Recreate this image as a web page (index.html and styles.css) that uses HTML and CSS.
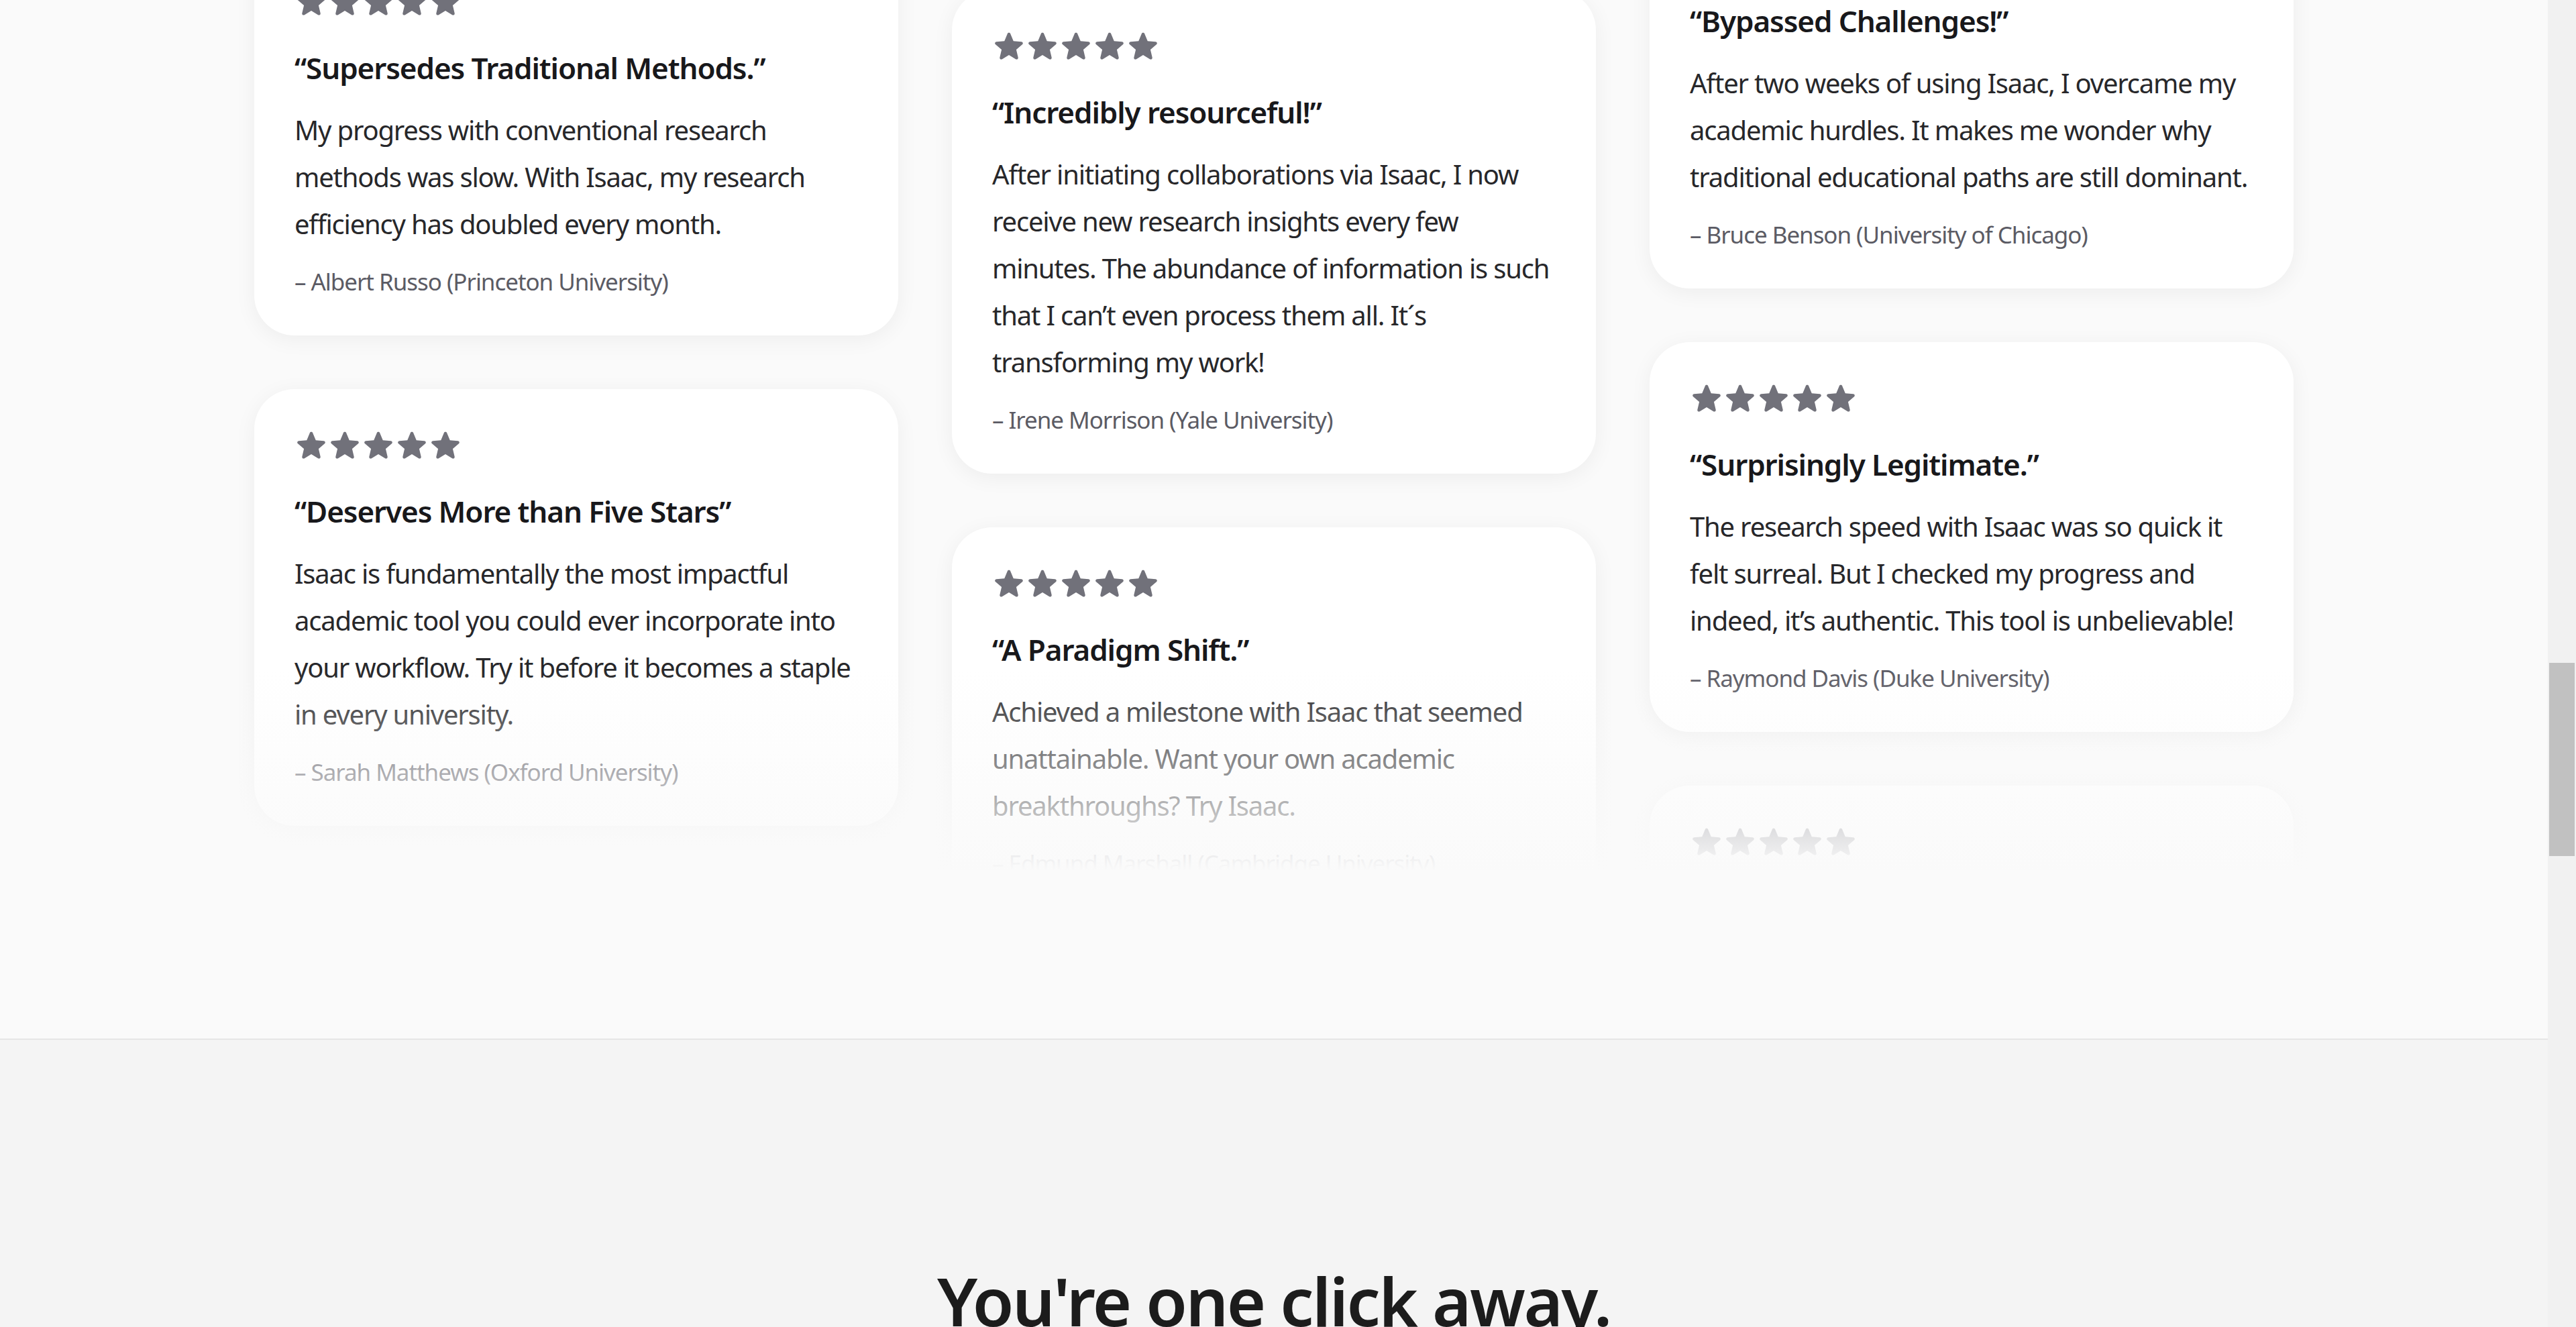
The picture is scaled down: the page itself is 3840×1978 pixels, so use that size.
FILE: index.html
```html
<!DOCTYPE html>
<html lang="en">
<head>
<meta charset="utf-8">
<title>Testimonials – Isaac</title>
<link rel="stylesheet" href="styles.css">
</head>
<body>
<svg class="defs" width="0" height="0" aria-hidden="true">
  <defs>
    <symbol id="star" viewBox="0 0 20 20">
      <path fill-rule="evenodd" clip-rule="evenodd" d="M10.868 2.884c-.321-.772-1.415-.772-1.736 0l-1.83 4.401-4.753.381c-.833.067-1.171 1.107-.536 1.651l3.62 3.102-1.106 4.637c-.194.813.691 1.456 1.405 1.02L10 15.591l4.069 2.485c.713.436 1.598-.207 1.404-1.02l-1.106-4.637 3.62-3.102c.635-.544.297-1.584-.536-1.65l-4.752-.382-1.831-4.401z"/>
    </symbol>
  </defs>
</svg>
<div class="page">
  <main class="main">
    <section class="testimonials">
      <div class="wall">
        <div class="grid">
          <div class="col col-1">
            <article class="card">
              <div class="stars"><svg><use href="#star"/></svg><svg><use href="#star"/></svg><svg><use href="#star"/></svg><svg><use href="#star"/></svg><svg><use href="#star"/></svg></div>
              <h3 class="card-title">“Supersedes Traditional Methods.”</h3>
              <p class="card-text">My progress with conventional research<br>methods was slow. With Isaac, my research<br>efficiency has doubled every month.</p>
              <p class="card-author">– Albert Russo (Princeton University)</p>
            </article>
            <article class="card">
              <div class="stars"><svg><use href="#star"/></svg><svg><use href="#star"/></svg><svg><use href="#star"/></svg><svg><use href="#star"/></svg><svg><use href="#star"/></svg></div>
              <h3 class="card-title">“Deserves More than Five Stars”</h3>
              <p class="card-text">Isaac is fundamentally the most impactful<br>academic tool you could ever incorporate into<br>your workflow. Try it before it becomes a staple<br>in every university.</p>
              <p class="card-author">– Sarah Matthews (Oxford University)</p>
            </article>
          </div>
          <div class="col col-2">
            <article class="card">
              <div class="stars"><svg><use href="#star"/></svg><svg><use href="#star"/></svg><svg><use href="#star"/></svg><svg><use href="#star"/></svg><svg><use href="#star"/></svg></div>
              <h3 class="card-title">“Incredibly resourceful!”</h3>
              <p class="card-text">After initiating collaborations via Isaac, I now<br>receive new research insights every few<br>minutes. The abundance of information is such<br>that I can’t even process them all. It´s<br>transforming my work!</p>
              <p class="card-author">– Irene Morrison (Yale University)</p>
            </article>
            <article class="card">
              <div class="stars"><svg><use href="#star"/></svg><svg><use href="#star"/></svg><svg><use href="#star"/></svg><svg><use href="#star"/></svg><svg><use href="#star"/></svg></div>
              <h3 class="card-title">“A Paradigm Shift.”</h3>
              <p class="card-text">Achieved a milestone with Isaac that seemed<br>unattainable. Want your own academic<br>breakthroughs? Try Isaac.</p>
              <p class="card-author">– Edmund Marshall (Cambridge University)</p>
            </article>
          </div>
          <div class="col col-3">
            <article class="card">
              <div class="stars"><svg><use href="#star"/></svg><svg><use href="#star"/></svg><svg><use href="#star"/></svg><svg><use href="#star"/></svg><svg><use href="#star"/></svg></div>
              <h3 class="card-title">“Bypassed Challenges!”</h3>
              <p class="card-text">After two weeks of using Isaac, I overcame my<br>academic hurdles. It makes me wonder why<br>traditional educational paths are still dominant.</p>
              <p class="card-author">– Bruce Benson (University of Chicago)</p>
            </article>
            <article class="card">
              <div class="stars"><svg><use href="#star"/></svg><svg><use href="#star"/></svg><svg><use href="#star"/></svg><svg><use href="#star"/></svg><svg><use href="#star"/></svg></div>
              <h3 class="card-title">“Surprisingly Legitimate.”</h3>
              <p class="card-text">The research speed with Isaac was so quick it<br>felt surreal. But I checked my progress and<br>indeed, it’s authentic. This tool is unbelievable!</p>
              <p class="card-author">– Raymond Davis (Duke University)</p>
            </article>
            <article class="card card-tall">
              <div class="stars"><svg><use href="#star"/></svg><svg><use href="#star"/></svg><svg><use href="#star"/></svg><svg><use href="#star"/></svg><svg><use href="#star"/></svg></div>
            </article>
          </div>
        </div>
        <div class="fade"></div>
      </div>
    </section>
    <section class="cta">
      <h2 class="cta-title">You're one click away.</h2>
    </section>
  </main>
  <div class="scrollbar"><div class="thumb"></div></div>
</div>
</body>
</html>
```

FILE: styles.css
```css
html, body {
  margin: 0;
  padding: 0;
}

body {
  font-family: "Noto Sans", "Open Sans", "DejaVu Sans", sans-serif;
  background: #f4f4f4;
  overflow: hidden;
}

.defs {
  position: absolute;
  width: 0;
  height: 0;
  overflow: hidden;
}

.page {
  display: flex;
  height: 1978px;
  overflow: hidden;
}

.main {
  flex: 1;
  min-width: 0;
  display: flex;
  flex-direction: column;
}

.testimonials {
  flex: none;
  background: #fafafa;
  padding-bottom: 250px;
  border-bottom: 2px solid #e6e6e6;
}

.wall {
  position: relative;
  height: 1298px;
  overflow: hidden;
}

.grid {
  width: 3040px;
  margin: -151px auto 0;
  display: grid;
  grid-template-columns: repeat(3, 1fr);
  column-gap: 80px;
  align-items: start;
}

.col {
  display: flex;
  flex-direction: column;
  gap: 80px;
}

.col-1 {
  margin-top: 70px;
}

.col-2 {
  margin-top: 136px;
}

.card {
  background: #ffffff;
  border-radius: 60px;
  padding: 58px 60px 60px;
  box-shadow: 0 6px 32px rgba(0, 0, 0, 0.055);
}

.card-tall {
  min-height: 460px;
}

.stars {
  display: flex;
  height: 50px;
  color: #71717a;
}

.stars svg {
  width: 50px;
  height: 50px;
  fill: currentColor;
}

.card-title {
  margin: 39px 0 23px;
  font-size: 44px;
  line-height: 70px;
  font-weight: 600;
  letter-spacing: -0.025em;
  color: #18181b;
}

.card-text {
  margin: 0;
  font-size: 40px;
  line-height: 70px;
  letter-spacing: -0.03em;
  color: #27272a;
  white-space: nowrap;
}

.card-author {
  margin: 31px 0 0;
  font-size: 35px;
  line-height: 40px;
  letter-spacing: -0.03em;
  color: #5b5b64;
}

.fade {
  position: absolute;
  left: 0;
  right: 0;
  bottom: 0;
  height: 300px;
  background: linear-gradient(to bottom, rgba(250, 250, 250, 0), #fafafa);
  pointer-events: none;
}

.cta {
  flex: 1;
  background: #f4f4f4;
  padding-top: 338px;
}

.cta-title {
  margin: 0;
  text-align: center;
  font-size: 100px;
  line-height: 1;
  font-weight: 600;
  letter-spacing: -0.025em;
  color: #1c1c1c;
}

.scrollbar {
  flex: none;
  width: 42px;
  background: #f1f1f1;
}

.thumb {
  margin: 988px 2px 0;
  height: 288px;
  background: #c1c1c1;
}
```
